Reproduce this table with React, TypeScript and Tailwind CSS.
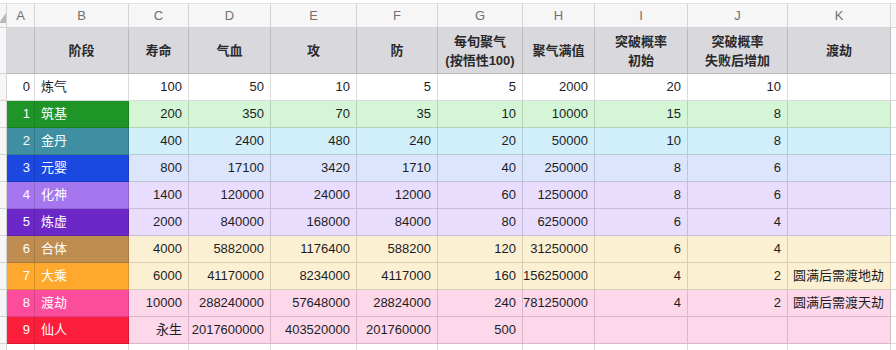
import React from "react";

type Row = {
  n: number;
  name: string;
  vals: string[];
  stage: string;
  data: string;
};

const rows: Row[] = [
  { n: 0, name: "炼气", vals: ["100", "50", "10", "5", "5", "2000", "20", "10", ""], stage: "bg-white text-[#1d1d1f]", data: "bg-white" },
  { n: 1, name: "筑基", vals: ["200", "350", "70", "35", "10", "10000", "15", "8", ""], stage: "bg-[#1f9427] text-white", data: "bg-[#d4f5d6]" },
  { n: 2, name: "金丹", vals: ["400", "2400", "480", "240", "20", "50000", "10", "8", ""], stage: "bg-[#3d8fa1] text-white", data: "bg-[#d0effa]" },
  { n: 3, name: "元婴", vals: ["800", "17100", "3420", "1710", "40", "250000", "8", "6", ""], stage: "bg-[#1c48e2] text-white", data: "bg-[#dce5fc]" },
  { n: 4, name: "化神", vals: ["1400", "120000", "24000", "12000", "60", "1250000", "8", "6", ""], stage: "bg-[#a676ef] text-white", data: "bg-[#e8ddfc]" },
  { n: 5, name: "炼虚", vals: ["2000", "840000", "168000", "84000", "80", "6250000", "6", "4", ""], stage: "bg-[#6b27c8] text-white", data: "bg-[#e8ddfc]" },
  { n: 6, name: "合体", vals: ["4000", "5882000", "1176400", "588200", "120", "31250000", "6", "4", ""], stage: "bg-[#bf8d4f] text-white", data: "bg-[#fcf0d3]" },
  { n: 7, name: "大乘", vals: ["6000", "41170000", "8234000", "4117000", "160", "156250000", "4", "2", "圆满后需渡地劫"], stage: "bg-[#fea82e] text-white", data: "bg-[#fcf0d3]" },
  { n: 8, name: "渡劫", vals: ["10000", "288240000", "57648000", "28824000", "240", "781250000", "4", "2", "圆满后需渡天劫"], stage: "bg-[#fc4d9d] text-white", data: "bg-[#fdd8ea]" },
  { n: 9, name: "仙人", vals: ["永生", "2017600000", "403520000", "201760000", "500", "", "", "", ""], stage: "bg-[#fd1e3b] text-white", data: "bg-[#fdd8ea]" },
];

const letters = ["A", "B", "C", "D", "E", "F", "G", "H", "I", "J", "K"];

const headers: React.ReactNode[] = [
  "",
  "阶段",
  "寿命",
  "气血",
  "攻",
  "防",
  <>
    每旬聚气
    <br />
    (按悟性100)
  </>,
  "聚气满值",
  <>
    突破概率
    <br />
    初始
  </>,
  <>
    突破概率
    <br />
    失败后增加
  </>,
  "渡劫",
];

const cols =
  "grid grid-cols-[7px_28px_94px_60px_82px_86px_81px_85px_72px_93px_100px_103px_1fr]";

const line = "border-r border-b border-black/[0.14]";

export default function App() {
  return (
    <div className="w-[896px] h-[350px] overflow-hidden bg-white font-['Liberation_Sans','Noto_Sans_CJK_SC',sans-serif] text-[13px] text-[#1d1d1f]">
      <div className="h-[4px] border-b border-black/[0.12]" />
      {/* column letters */}
      <div className={`${cols} h-[24px] bg-[#f6f6f7] text-[#707070]`}>
        <div className={`${line} relative overflow-hidden`}>
          <svg className="absolute right-0 bottom-[4px]" width="7" height="10" viewBox="0 0 7 10">
            <path d="M7 0 L7 10 L0 10 Z" fill="#b8b8bc" />
          </svg>
        </div>
        {letters.map((l) => (
          <div key={l} className={`${line} flex items-center justify-center`}>
            {l}
          </div>
        ))}
        <div className="border-b border-black/[0.14]" />
      </div>
      {/* header row */}
      <div className={`${cols} h-[46px]`}>
        <div className={`${line} bg-[#f6f6f7]`} />
        {headers.map((h, i) => (
          <div
            key={i}
            className={`${line} bg-[#d9d9dd] flex items-center justify-center text-center font-semibold leading-[19px] text-[#2a2a2c]`}
          >
            <div>{h}</div>
          </div>
        ))}
        <div className="border-b border-black/[0.14] bg-[#fafafa]" />
      </div>
      {/* data rows */}
      {rows.map((r) => (
        <div key={r.n} className={`${cols} h-[27px]`}>
          <div className={`${line} bg-[#f6f6f7]`} />
          <div className={`${line} ${r.stage} flex items-center justify-end pr-[4px]`}>{r.n}</div>
          <div className={`${line} ${r.stage} flex items-center pl-[6px]`}>{r.name}</div>
          {r.vals.slice(0, 8).map((v, i) => (
            <div key={i} className={`${line} ${r.data} flex items-center justify-end pr-[6px]`}>
              {v}
            </div>
          ))}
          <div className={`${line} ${r.data} flex items-center pl-[5px]`}>{r.vals[8]}</div>
          <div className="border-b border-black/[0.14]" />
        </div>
      ))}
      <div className={`${cols} h-[10px]`}>
        <div className={`${line} bg-[#f6f6f7]`} />
        {letters.map((l) => (
          <div key={l} className={line} />
        ))}
        <div />
      </div>
    </div>
  );
}
